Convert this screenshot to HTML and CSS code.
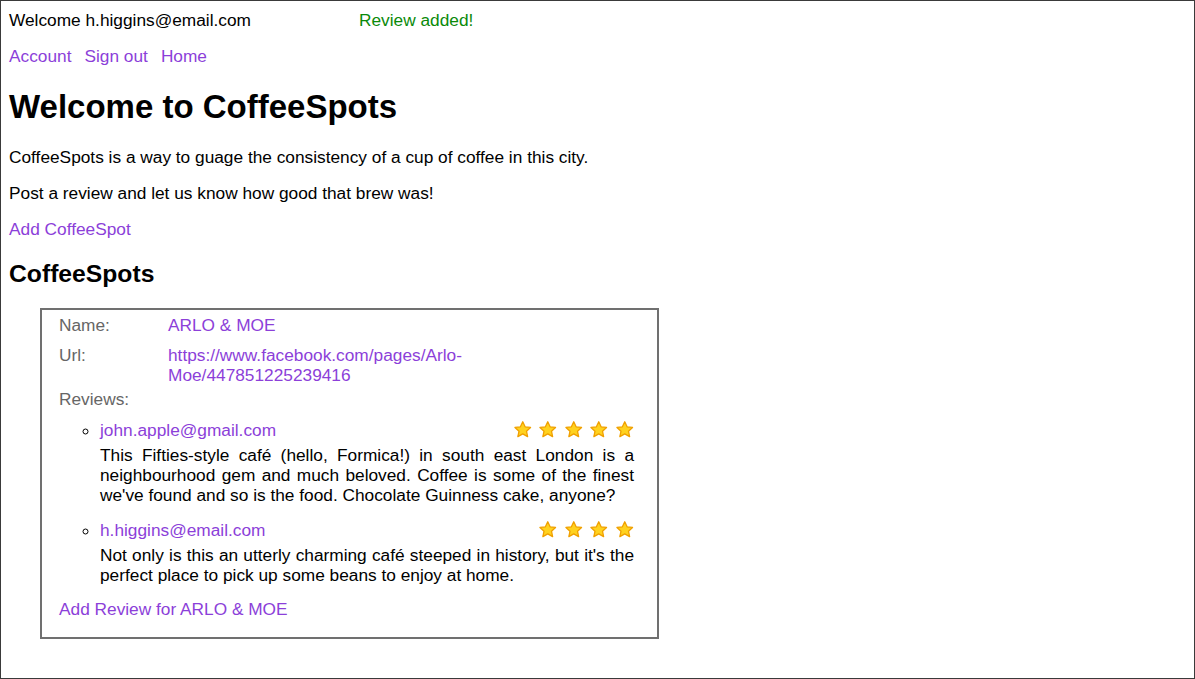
FILE: index.html
```html
<!DOCTYPE html>
<html>
<head>
<meta charset="utf-8">
<title>CoffeeSpots</title>
<link rel="stylesheet" href="styles.css">
</head>
<body>
<div class="frame">
  <div class="topbar">
    <span class="welcome">Welcome h.higgins@email.com</span>
    <span class="flash">Review added!</span>
  </div>
  <nav class="nav">
    <a href="#">Account</a>
    <a href="#">Sign out</a>
    <a href="#">Home</a>
  </nav>
  <h1 class="title">Welcome to CoffeeSpots</h1>
  <p class="para">CoffeeSpots is a way to guage the consistency of a cup of coffee in this city.</p>
  <p class="para">Post a review and let us know how good that brew was!</p>
  <p class="para"><a href="#">Add CoffeeSpot</a></p>
  <h2 class="subtitle">CoffeeSpots</h2>

  <div class="spot">
    <div class="row row-name">
      <span class="label">Name:</span>
      <a class="value" href="#">ARLO &amp; MOE</a>
    </div>
    <div class="row row-url">
      <span class="label">Url:</span>
      <a class="value url" href="#">https://www.facebook.com/pages/Arlo-<br>Moe/447851225239416</a>
    </div>
    <div class="row row-reviews">
      <span class="label">Reviews:</span>
    </div>
    <ul class="reviews">
      <li class="review">
        <div class="review-head">
          <a href="#">john.apple@gmail.com</a>
          <span class="stars">
            <svg class="star" viewBox="0 0 24 24"><path d="M12 2.2l2.9 6.2 6.7.8-5 4.6 1.4 6.7L12 17.1l-6 3.4 1.4-6.7-5-4.6 6.7-.8z"/></svg>
            <svg class="star" viewBox="0 0 24 24"><path d="M12 2.2l2.9 6.2 6.7.8-5 4.6 1.4 6.7L12 17.1l-6 3.4 1.4-6.7-5-4.6 6.7-.8z"/></svg>
            <svg class="star" viewBox="0 0 24 24"><path d="M12 2.2l2.9 6.2 6.7.8-5 4.6 1.4 6.7L12 17.1l-6 3.4 1.4-6.7-5-4.6 6.7-.8z"/></svg>
            <svg class="star" viewBox="0 0 24 24"><path d="M12 2.2l2.9 6.2 6.7.8-5 4.6 1.4 6.7L12 17.1l-6 3.4 1.4-6.7-5-4.6 6.7-.8z"/></svg>
            <svg class="star" viewBox="0 0 24 24"><path d="M12 2.2l2.9 6.2 6.7.8-5 4.6 1.4 6.7L12 17.1l-6 3.4 1.4-6.7-5-4.6 6.7-.8z"/></svg>
          </span>
        </div>
        <p class="review-text">This Fifties-style café (hello, Formica!) in south east London is a neighbourhood gem and much beloved. Coffee is some of the finest we've found and so is the food. Chocolate Guinness cake, anyone?</p>
      </li>
      <li class="review">
        <div class="review-head">
          <a href="#">h.higgins@email.com</a>
          <span class="stars">
            <svg class="star" viewBox="0 0 24 24"><path d="M12 2.2l2.9 6.2 6.7.8-5 4.6 1.4 6.7L12 17.1l-6 3.4 1.4-6.7-5-4.6 6.7-.8z"/></svg>
            <svg class="star" viewBox="0 0 24 24"><path d="M12 2.2l2.9 6.2 6.7.8-5 4.6 1.4 6.7L12 17.1l-6 3.4 1.4-6.7-5-4.6 6.7-.8z"/></svg>
            <svg class="star" viewBox="0 0 24 24"><path d="M12 2.2l2.9 6.2 6.7.8-5 4.6 1.4 6.7L12 17.1l-6 3.4 1.4-6.7-5-4.6 6.7-.8z"/></svg>
            <svg class="star" viewBox="0 0 24 24"><path d="M12 2.2l2.9 6.2 6.7.8-5 4.6 1.4 6.7L12 17.1l-6 3.4 1.4-6.7-5-4.6 6.7-.8z"/></svg>
          </span>
        </div>
        <p class="review-text">Not only is this an utterly charming café steeped in history, but it's the perfect place to pick up some beans to enjoy at home.</p>
      </li>
    </ul>
    <a class="add-review" href="#">Add Review for ARLO &amp; MOE</a>
  </div>
</div>
</body>
</html>
```

FILE: styles.css
```css
html, body {
  margin: 0;
  padding: 0;
  height: 100%;
}
body {
  font-family: "Liberation Sans", Arial, Helvetica, sans-serif;
  font-size: 17.3px;
  line-height: 20px;
  color: #000;
  background: #fff;
}
.frame {
  box-sizing: border-box;
  height: 100vh;
  border: 1px solid #3a3a3a;
  padding: 9px 8px 8px 8px;
  overflow: hidden;
}
a {
  color: #8c3fd9;
  text-decoration: none;
}
.topbar {
  display: flex;
}
.welcome {
  width: 350px;
}
.flash {
  color: #0a8a0a;
}
.nav {
  margin-top: 16px;
  display: flex;
  gap: 13px;
}
.title {
  font-size: 33px;
  line-height: 37px;
  font-weight: bold;
  margin: 22px 0 22px 0;
}
.para {
  margin: 16px 0;
}
.subtitle {
  font-size: 24.7px;
  line-height: 28px;
  font-weight: bold;
  margin: 21px 0 20px 0;
}
.spot {
  margin-left: 31px;
  width: 619px;
  box-sizing: border-box;
  border: 2px solid #707070;
  padding: 5px 23px 18px 17px;
}
.row {
  display: flex;
}
.row-url {
  margin-top: 10px;
}
.row-reviews {
  margin-top: 4px;
}
.label {
  width: 109px;
  flex: none;
  color: #666;
}
.reviews {
  list-style: circle;
  margin: 11px 0 0 0;
  padding-left: 41px;
}
.review + .review {
  margin-top: 15px;
}
.review-head {
  display: flex;
  justify-content: space-between;
  align-items: center;
}
.stars {
  display: flex;
  gap: 6px;
}
.star {
  width: 19.5px;
  height: 19.5px;
}
.star path {
  fill: #ffd21f;
  stroke: #f0a000;
  stroke-width: 1.6;
  stroke-linejoin: round;
}
.review-text {
  margin: 5px 0 0 0;
  text-align: justify;
}
.add-review {
  display: block;
  margin-top: 14px;
}
```
